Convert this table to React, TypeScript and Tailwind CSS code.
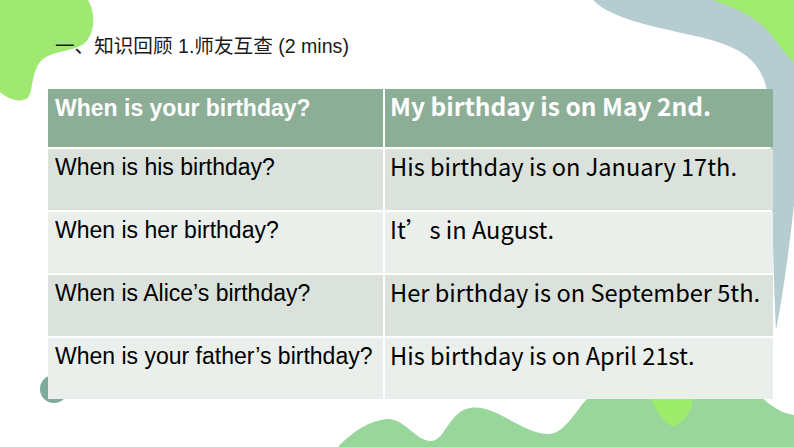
const rows = [
  { q: "When is his birthday?", a: "His birthday is on January 17th." },
  { q: "When is her birthday?", a: "It’s in August." },
  { q: "When is Alice’s birthday?", a: "Her birthday is on September 5th." },
  { q: "When is your father’s birthday?", a: "His birthday is on April 21st." },
];

const latin = "font-['Liberation_Sans','Noto_Sans_CJK_SC',sans-serif]";
const round = "font-['Noto_Sans_CJK_SC','Noto_Sans',sans-serif]";

function Decorations() {
  return (
    <svg
      className="absolute inset-0"
      width="794"
      height="447"
      viewBox="0 0 794 447"
    >
      {/* top left blob */}
      <path
        d="M0,0 L88,0 C95,12 96,30 86,42 C76,52 50,50 40,62 C32,72 33,88 29,96 C25,103 12,102 0,92 Z"
        fill="#9fe872"
      />
      {/* grey swoosh */}
      <path
        d="M593,0 C610,18 650,26 700,37 C745,48 762,62 768,95 C772,140 772,250 776,330 C784,290 790,240 794,205 L794,0 Z"
        fill="#b5ccd0"
      />
      <path
        d="M713,0 C735,8 752,15 765,28 C777,40 785,55 794,62 L794,0 Z"
        fill="#a0ec6e"
      />
      {/* bottom wave */}
      <path
        d="M338,447 C352,432 370,420 388,419 C405,419 415,440 430,441 C445,442 448,412 470,408 C495,404 520,432 547,434 C565,435 575,410 590,396 L760,396 C770,405 780,413 794,415 L794,447 Z"
        fill="#98d69b"
      />
      <path
        d="M650,396 L693,396 C693,410 683,425 673,426 C665,425 655,410 650,396 Z"
        fill="#9dec6b"
      />
      <circle cx="54" cy="389" r="14" fill="#7fab9d" />
    </svg>
  );
}

export default function App() {
  return (
    <div className="relative w-[794px] h-[447px] overflow-hidden bg-white">
      <Decorations />

      <div className="relative">
        {/* title */}
        <div
          className={`pt-[34px] pl-[55px] text-[19.6px] leading-[24px] text-[#1a1a1a] ${latin}`}
        >
          一、知识回顾 1.师友互查 (2 mins)
        </div>

        {/* table */}
        <div className="ml-[48px] mt-[31px] w-[725px] grid grid-cols-[335px_388px] gap-[2px]">
          <div
            className={`h-[58px] bg-[#8cae97] pl-[7px] pt-[6px] text-[23px] leading-[26px] font-bold text-white ${latin}`}
          >
            When is your birthday?
          </div>
          <div
            className={`h-[58px] bg-[#8cae97] pl-[5px] pt-[3px] text-[24.5px] leading-[28px] font-bold text-white ${round}`}
          >
            My birthday is on May 2nd.
          </div>

          {rows.map((row, i) => {
            const bg = i % 2 === 0 ? "bg-[#dbe2dc]" : "bg-[#ebefec]";
            return [
              <div
                key={row.q}
                className={`h-[61px] ${bg} pl-[7px] pt-[5px] text-[23px] leading-[26px] text-black ${latin}`}
              >
                {row.q}
              </div>,
              <div
                key={row.a}
                className={`h-[61px] ${bg} pl-[5px] pt-[3px] text-[23.6px] leading-[28px] text-black ${round}`}
              >
                {row.a}
              </div>,
            ];
          })}
        </div>
      </div>
    </div>
  );
}
